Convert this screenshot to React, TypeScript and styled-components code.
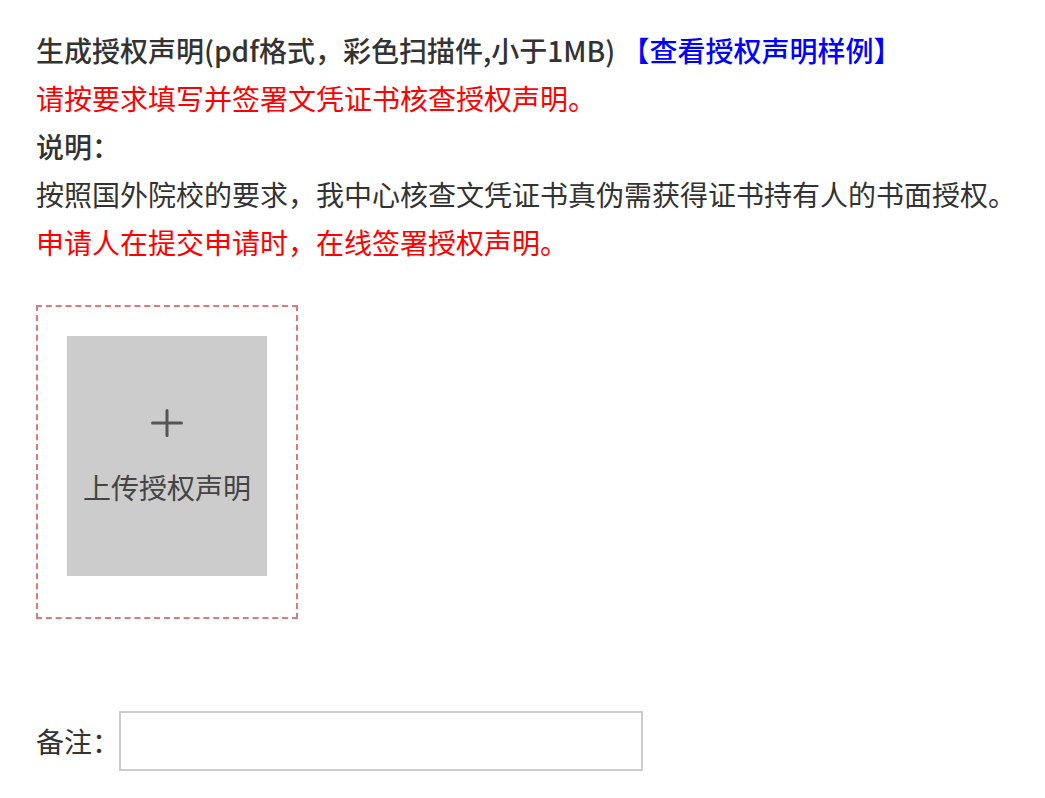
import React from 'react'
import styled, { createGlobalStyle } from 'styled-components'

const GlobalStyle = createGlobalStyle`
    body {
        margin: 0;
        background: #fff;
        font-family: "Noto Sans CJK SC", "Noto Sans", sans-serif;
    }
`

const Page = styled.div`
    padding: 26px 36px 0;
    color: #333;
    font-size: 28px;
    line-height: 48px;
`

const Line = styled.div<{ red?: boolean; bold?: boolean }>`
    color: ${({ red }) => (red ? '#ff0000' : '#333')};
    font-weight: ${({ bold }) => (bold ? 500 : 400)};
    white-space: nowrap;
`

const SampleLink = styled.a`
    color: #0000ff;
    text-decoration: none;
    cursor: pointer;
`

const UploadFrame = styled.div`
    margin-top: 39px;
    width: 200px;
    padding: 29px 29px 41px;
    border: 2px dashed #e07a7a;
`

const UploadTile = styled.div`
    width: 200px;
    height: 240px;
    background: #cccccc;
    display: flex;
    flex-direction: column;
    align-items: center;
    justify-content: center;
    gap: 34px;
    cursor: pointer;
`

const UploadText = styled.div`
    font-family: "Noto Sans CJK SC", sans-serif;
    font-size: 28px;
    line-height: 32px;
    color: #444;
    white-space: nowrap;
`

const RemarkRow = styled.div`
    margin-top: 92px;
    display: flex;
    align-items: center;
`

const RemarkLabel = styled.label`
    font-size: 28px;
    color: #333;
`

const RemarkInput = styled.input`
    box-sizing: border-box;
    margin-left: -1px;
    width: 524px;
    height: 60px;
    border: 2px solid #cccccc;
    outline: none;
    font-size: 20px;
    padding: 0 10px;
`

export default function App() {
    return (
        <>
            <GlobalStyle />
            <Page>
                <Line bold>
                    生成授权声明(pdf格式，彩色扫描件,小于1MB) <SampleLink>【查看授权声明样例】</SampleLink>
                </Line>
                <Line red>请按要求填写并签署文凭证书核查授权声明。</Line>
                <Line bold>说明：</Line>
                <Line>按照国外院校的要求，我中心核查文凭证书真伪需获得证书持有人的书面授权。</Line>
                <Line red>申请人在提交申请时，在线签署授权声明。</Line>
                <UploadFrame>
                    <UploadTile>
                        <svg width="32" height="28" viewBox="0 0 32 28">
                            <path d="M1.5 14h29M16 1.5v25" stroke="#555" strokeWidth="3" strokeLinecap="round" />
                        </svg>
                        <UploadText>上传授权声明</UploadText>
                    </UploadTile>
                </UploadFrame>
                <RemarkRow>
                    <RemarkLabel>备注：</RemarkLabel>
                    <RemarkInput type="text" />
                </RemarkRow>
            </Page>
        </>
    )
}
